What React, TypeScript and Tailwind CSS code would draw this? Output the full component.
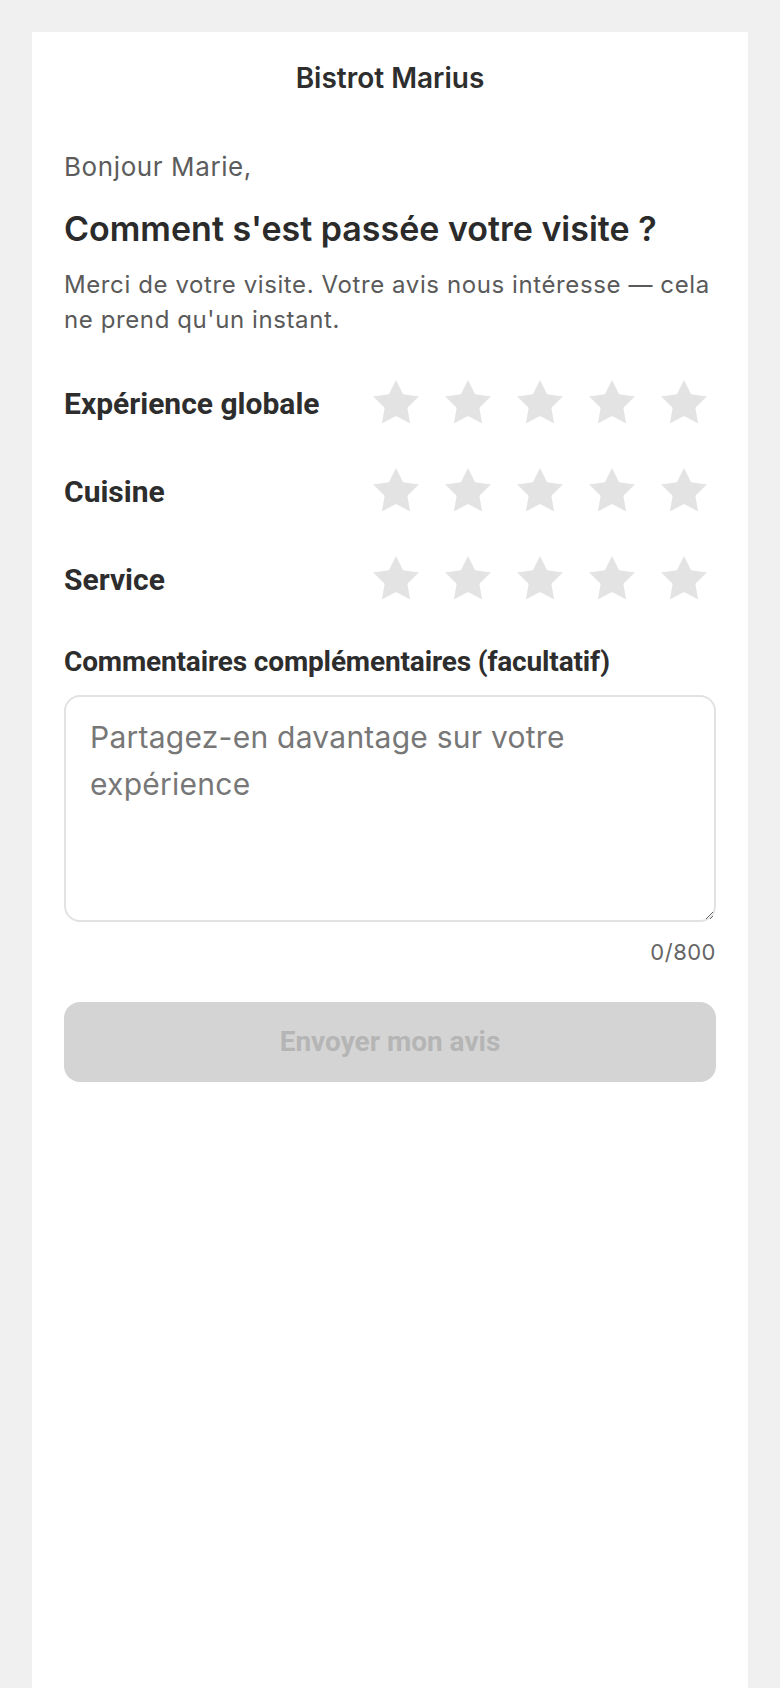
import { useState } from "react";

const criteria = ["Expérience globale", "Cuisine", "Service"];

function Star({ active }: { active: boolean }) {
  return (
    <svg viewBox="0 0 48 48" className="h-[48px] w-[48px]">
      <polygon
        points="24,0 31.05,14.29 46.83,16.58 35.41,27.71 38.11,43.42 24,36 9.89,43.42 12.59,27.71 1.17,16.58 16.95,14.29"
        fill={active ? "#f5b301" : "#e3e3e3"}
      />
    </svg>
  );
}

function RatingRow({ label }: { label: string }) {
  const [value, setValue] = useState(0);
  return (
    <div className="flex h-[48px] items-center justify-between">
      <span className="font-['Roboto',sans-serif] text-[30px] font-bold text-[#2d2d2d]">{label}</span>
      <div className="mr-[8px] flex gap-[24px]">
        {[1, 2, 3, 4, 5].map((n) => (
          <button key={n} type="button" onClick={() => setValue(n)} aria-label={`${n} étoile(s)`}>
            <Star active={n <= value} />
          </button>
        ))}
      </div>
    </div>
  );
}

export default function App() {
  const [comment, setComment] = useState("");

  return (
    <div className="flex min-h-screen flex-col bg-[#f0f0f0] px-[32px] pt-[32px] font-['Inter',sans-serif]">
      <div className="flex flex-1 flex-col bg-white px-[32px]">
        <div className="pt-[24px] text-center text-[28px] font-semibold leading-[44px] text-[#2e2e2e]">
          Bistrot Marius
        </div>

        <p className="mt-[47px] text-[26px] leading-[40px] tracking-[0.6px] text-[#5c5c5c]">Bonjour Marie,</p>
        <h1 className="mt-[20px] text-[34px] font-semibold leading-[44px] text-[#2b2b2b]">
          Comment s'est passée votre visite ?
        </h1>
        <p className="mt-[17px] text-[24px] leading-[34.8px] tracking-[0.6px] text-[#5a5a5a]">
          Merci de votre visite. Votre avis nous intéresse — cela ne prend qu'un instant.
        </p>

        <div className="mt-[42px] flex flex-col gap-[40px]">
          {criteria.map((c) => (
            <RatingRow key={c} label={c} />
          ))}
        </div>

        <label className="mt-[40px] block font-['Roboto',sans-serif] text-[28px] font-bold leading-[36px] tracking-[-0.15px] text-[#2d2d2d]">
          Commentaires complémentaires (facultatif)
        </label>
        <textarea
          value={comment}
          onChange={(e) => setComment(e.target.value.slice(0, 800))}
          placeholder="Partagez-en davantage sur votre expérience"
          className="mt-[15px] h-[227px] w-full rounded-[16px] border-2 border-[#e2e2e2] px-[24px] py-[17px] text-[30px] leading-[47px] tracking-[0.25px] text-[#2b2b2b] outline-none placeholder:text-[#777777]"
        />
        <div className="mt-[14px] text-right text-[22px] leading-[32px] tracking-[0.5px] text-[#666666]">
          {comment.length}/800
        </div>

        <button
          type="button"
          disabled
          className="mt-[34px] h-[80px] w-full rounded-[16px] bg-[#d4d4d4] font-['Roboto',sans-serif] text-[28px] font-bold text-[#b5b5b5]"
        >
          Envoyer mon avis
        </button>
      </div>
    </div>
  );
}
